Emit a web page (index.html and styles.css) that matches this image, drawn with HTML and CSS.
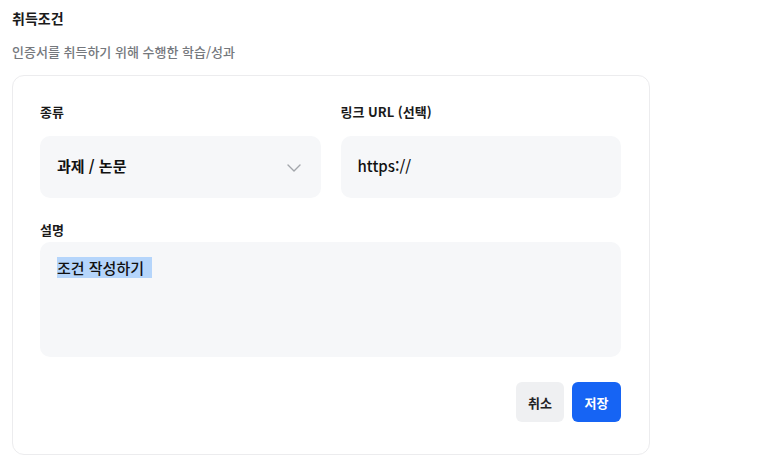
FILE: index.html
```html
<!DOCTYPE html>
<html lang="ko">
<head>
<meta charset="utf-8">
<link rel="stylesheet" href="styles.css">
</head>
<body>
<h2 class="title">취득조건</h2>
<p class="subtitle">인증서를 취득하기 위해 수행한 학습/성과</p>
<div class="card">
  <div class="row">
    <div class="field">
      <div class="label">종류</div>
      <div class="input select">
        <span>과제 / 논문</span>
        <svg class="chev" width="14" height="8" viewBox="0 0 14 8"><path d="M1 1 L7 7 L13 1" fill="none" stroke="#a3a6ab" stroke-width="1.4" stroke-linecap="round" stroke-linejoin="round"/></svg>
      </div>
    </div>
    <div class="field">
      <div class="label">링크 URL (선택)</div>
      <div class="input url"><span>https://</span></div>
    </div>
  </div>
  <div class="label desc-label">설명</div>
  <div class="textarea"><span class="sel">조건 작성하기&nbsp;&nbsp;</span></div>
  <div class="actions">
    <button class="btn cancel">취소</button>
    <button class="btn save">저장</button>
  </div>
</div>
</body>
</html>
```
FILE: styles.css
```css
* { box-sizing: border-box; }
body {
  margin: 0;
  padding: 8px 12px;
  font-family: "Noto Sans CJK KR", "Noto Sans", sans-serif;
  color: #111;
  background: #fff;
}
.title {
  margin: 0;
  font-size: 14px;
  line-height: 20px;
  font-weight: 700;
  color: #1a1a1a;
}
.subtitle {
  margin: 14px 0 0;
  font-size: 13px;
  line-height: 20px;
  font-weight: 500;
  color: #75787d;
}
.card {
  margin-top: 13px;
  width: 638px;
  border: 1px solid #ececee;
  border-radius: 12px;
  padding: 26px 28px 32px 27px;
}
.row {
  display: grid;
  grid-template-columns: 1fr 1fr;
  column-gap: 20px;
}
.label {
  font-size: 13px;
  line-height: 20px;
  font-weight: 600;
  color: #1a1a1a;
  margin-bottom: 14px;
}
.input {
  height: 62px;
  border-radius: 10px;
  background: #f6f7f9;
  display: flex;
  align-items: center;
  justify-content: space-between;
  padding: 0 20px 0 17px;
  font-size: 15px;
  line-height: 20px;
}
.input span { margin-top: -3px; }
.select span { font-weight: 600; }
.url span { font-weight: 500; }
.chev { margin-top: 2px; }
.desc-label {
  margin-top: 22px;
  margin-bottom: 2px;
}
.textarea {
  height: 115px;
  border-radius: 10px;
  background: #f6f7f9;
  padding: 15px 17px;
  font-size: 15px;
  line-height: 21px;
  font-weight: 500;
}
.sel { background: #b5d5fb; }
.actions {
  display: flex;
  justify-content: flex-end;
  gap: 8px;
  margin-top: 25px;
}
.btn {
  height: 40px;
  border: none;
  border-radius: 6px;
  padding: 0 12px;
  font-family: inherit;
  font-size: 13px;
  font-weight: 700;
}
.cancel { background: #eff0f2; color: #222; width: 48px; }
.save { background: #1664f4; color: #fff; width: 49px; }
```
